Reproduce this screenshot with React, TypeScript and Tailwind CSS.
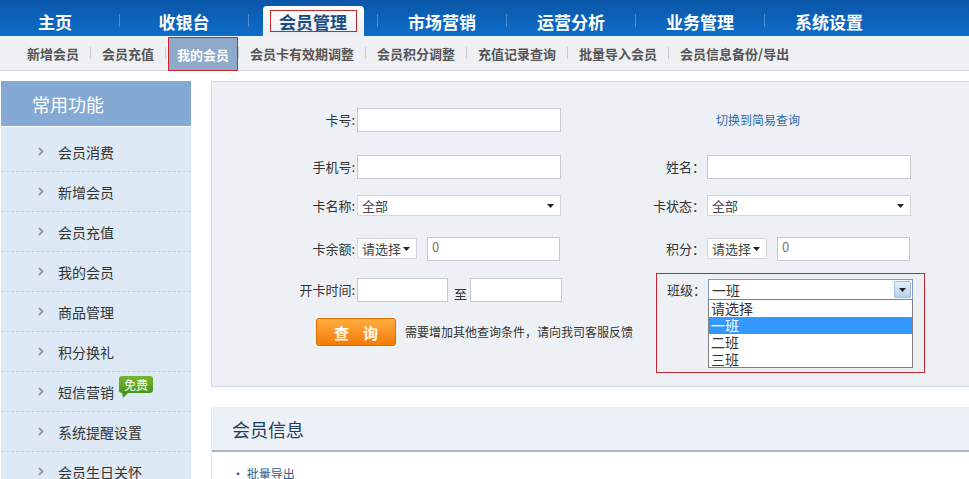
const navItems = ["主页", "收银台", "会员管理", "市场营销", "运营分析", "业务管理", "系统设置"];
const subItems = ["新增会员", "会员充值", "我的会员", "会员卡有效期调整", "会员积分调整", "充值记录查询", "批量导入会员", "会员信息备份/导出"];
const sideItems = ["会员消费", "新增会员", "会员充值", "我的会员", "商品管理", "积分换礼", "短信营销", "系统提醒设置", "会员生日关怀"];

const Tri = () => (
  <svg width="7" height="4" viewBox="0 0 7 4">
    <polygon points="0,0 7,0 3.5,4" fill="#222" />
  </svg>
);

const Input = ({ w, value }: { w: string; value?: string }) => (
  <div className={`h-[24px] bg-white border border-[#c6cacf] ${w} pl-[4px] pt-[2px] text-[13px] leading-none text-[#777]`}>
    {value}
  </div>
);

const Select = ({ w, text }: { w: string; text: string }) => (
  <div className={`h-[21px] bg-white border border-[#d3d7db] ${w} flex items-center justify-between pl-[4px] pr-[6px] text-[13px] leading-none text-[#444]`}>
    <span>{text}</span>
    <Tri />
  </div>
);

const Label = ({ w, text }: { w: string; text: string }) => (
  <div className={`${w} shrink-0 text-right pr-[2px] text-[13px] leading-none text-[#333]`}>{text}</div>
);

export default function App() {
  return (
    <div className="w-[969px] h-[479px] overflow-hidden bg-white font-['Noto_Sans_CJK_SC',sans-serif] text-[#333]">
      {/* top nav */}
      <div className="h-[36px] bg-linear-to-b from-[#0a57a9] to-[#0e6dc8] flex">
        <div className="flex ml-[-9px] h-full">
          {navItems.map((n, i) => (
            <div key={n} className="flex h-full">
              {i > 0 && <div className="w-px h-[13px] self-center mt-[5px] bg-[#4b8bd3]" />}
              <div className="w-[128px] h-full flex items-end justify-center">
                {n === "会员管理" ? (
                  <div className="w-[101px] h-[30px] rounded-t-[4px] bg-linear-to-b from-white to-[#eaeef3] flex justify-center pt-[4px]">
                    <span className="border border-[#c8262c] w-[87px] h-[22px] flex items-center justify-center text-[17px] font-bold text-[#1a4c84] leading-none">
                      会员管理
                    </span>
                  </div>
                ) : (
                  <span className="h-full flex items-center pt-[6px] text-[17px] font-bold text-white leading-none">{n}</span>
                )}
              </div>
            </div>
          ))}
        </div>
      </div>

      {/* sub nav */}
      <div className="h-[35px] bg-[#eef0f3] border-b border-[#d6dade] flex pl-[16px]">
        {subItems.map((s, i) => (
          <div key={s} className="flex">
            {i > 0 && <div className="w-px h-[12px] self-center bg-[#c9cdd2]" />}
            {s === "我的会员" ? (
              <div className="ml-[2px] px-[8px] mt-px -mb-px bg-[#8ea9c9] border border-[#c8262c] flex items-center text-[13px] font-bold text-white leading-none">
                {s}
              </div>
            ) : (
              <div className="px-[11px] flex items-center text-[13px] font-bold text-[#555] leading-none">{s}</div>
            )}
          </div>
        ))}
      </div>

      <div className="flex mt-[10px]">
        {/* sidebar */}
        <aside className="ml-px w-[190px] shrink-0">
          <div className="h-[45px] bg-[#84aad4] text-white text-[18px] pl-[31px] flex items-center leading-none">常用功能</div>
          <div className="h-px bg-white" />
          <div className="bg-[#dde9f4] pt-[5px]">
            {sideItems.map((s) => (
              <div key={s} className="h-[40px] border-b border-dashed border-[#c2cedb] flex items-center pl-[37px]">
                <svg width="6" height="9" viewBox="0 0 6 9">
                  <polyline points="1,1 4.5,4.5 1,8" fill="none" stroke="#9a9a9a" strokeWidth="1.8" />
                </svg>
                <span className="ml-[14px] text-[14px] leading-none text-[#333]">{s}</span>
                {s === "短信营销" && (
                  <span className="relative ml-[5px] self-start mt-[4px] h-[17px] px-[5px] rounded-[3px] bg-linear-to-b from-[#72b82f] to-[#4b9417] text-white text-[12px] leading-[17px]">
                    免费
                    <svg className="absolute left-[3px] top-[16px]" width="7" height="6" viewBox="0 0 7 6">
                      <polygon points="0,0 7,0 1,6" fill="#4b9417" />
                    </svg>
                  </span>
                )}
              </div>
            ))}
          </div>
        </aside>

        {/* main */}
        <main className="ml-[20px] w-[780px] shrink-0">
          <div className="h-[306px] bg-[#edf1f6] border border-[#d2d9e1] pt-[25px]">
            {/* row 1 */}
            <div className="flex items-center h-[25px]">
              <Label w="w-[145px]" text="卡号:" />
              <Input w="w-[204px]" />
              <div className="w-[146px]" />
              <span className="pl-[9px] text-[12px] leading-none text-[#2f6aa8]">切换到简易查询</span>
            </div>
            {/* row 2 */}
            <div className="flex items-center h-[25px] mt-[22px]">
              <Label w="w-[145px]" text="手机号:" />
              <Input w="w-[204px]" />
              <Label w="w-[146px]" text="姓名：" />
              <Input w="w-[204px]" />
            </div>
            {/* row 3 */}
            <div className="flex items-center h-[25px] mt-[14px]">
              <Label w="w-[145px]" text="卡名称:" />
              <Select w="w-[204px]" text="全部" />
              <Label w="w-[146px]" text="卡状态：" />
              <Select w="w-[204px]" text="全部" />
            </div>
            {/* row 4 */}
            <div className="flex items-center h-[25px] mt-[18px]">
              <Label w="w-[145px]" text="卡余额:" />
              <Select w="w-[60px]" text="请选择" />
              <div className="ml-[10px]">
                <Input w="w-[133px]" value="0" />
              </div>
              <div className="w-[1px]" />
              <Label w="w-[146px]" text="积分：" />
              <Select w="w-[60px]" text="请选择" />
              <div className="ml-[10px]">
                <Input w="w-[133px]" value="0" />
              </div>
            </div>
            {/* row 5 */}
            <div className="flex items-center h-[25px] mt-[16px]">
              <Label w="w-[145px]" text="开卡时间:" />
              <Input w="w-[91px]" />
              <span className="ml-[6px] mr-[3px] mt-[8px] text-[13px] leading-none">至</span>
              <Input w="w-[92px]" />
              <div className="relative flex items-center h-full">
                <Label w="w-[146px]" text="班级：" />
                <div className="h-[21px] w-[205px] bg-white border border-[#7f9db9] flex items-center justify-between pl-[3px] pr-px text-[14px] leading-none text-[#333]">
                  <span>一班</span>
                  <div className="w-[17px] h-[17px] bg-linear-to-b from-[#e6f0fc] to-[#b6cfee] border border-[#a3bbdc] rounded-[1px] flex items-center justify-center">
                    <Tri />
                  </div>
                </div>
                <div className="absolute left-[146px] top-[22px] w-[205px] bg-white border border-[#808080] text-[14px] leading-[17px] text-[#333]">
                  <div className="h-[17px] pl-[2px]">请选择</div>
                  <div className="h-[17px] pl-[2px] bg-[#3399ff] text-white">一班</div>
                  <div className="h-[17px] pl-[2px]">二班</div>
                  <div className="h-[16px] pl-[2px]">三班</div>
                </div>
                <div className="absolute left-[94px] top-[-4px] w-[269px] h-[100px] border border-[#c8262c]" />
              </div>
            </div>
            {/* row 6 */}
            <div className="flex items-center h-[28px] mt-[16px]">
              <button className="ml-[104px] w-[80px] h-[28px] rounded-[3px] bg-linear-to-b from-[#ffad3d] to-[#f37a00] border border-[#dc6d00] flex items-center justify-center gap-[14px] text-white font-bold text-[15px] leading-none">
                <span>查</span>
                <span>询</span>
              </button>
              <span className="ml-[9px] text-[12px] leading-none text-[#333]">需要增加其他查询条件，请向我司客服反馈</span>
            </div>
          </div>

          {/* member info */}
          <div className="mt-[20px] border-l border-[#e3e8ee]">
            <div className="h-[45px] bg-[#ebf1f7] border-b-2 border-[#a9b5c1] flex items-center pl-[20px] text-[18px] leading-none text-[#1d3e5e]">
              会员信息
            </div>
            <div className="pl-[20px] pt-[16px] text-[12px] leading-none text-[#2b5c8f]">· 批量导出</div>
          </div>
        </main>
      </div>
    </div>
  );
}
